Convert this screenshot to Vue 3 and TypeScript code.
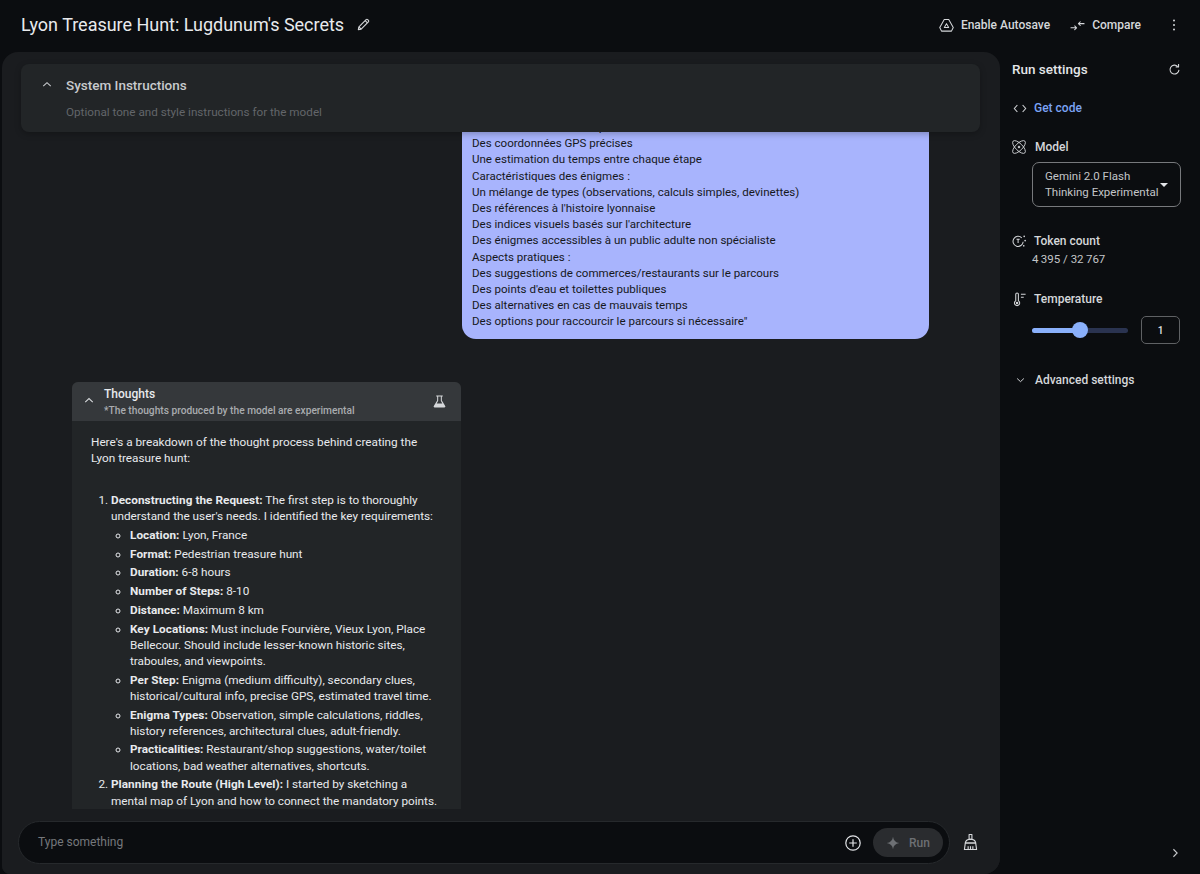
<script setup lang="ts">
const bubbleLines: string[] = [
  'Des informations historiques et culturelles',
  'Des coordonnées GPS précises',
  'Une estimation du temps entre chaque étape',
  'Caractéristiques des énigmes :',
  'Un mélange de types (observations, calculs simples, devinettes)',
  "Des références à l'histoire lyonnaise",
  "Des indices visuels basés sur l'architecture",
  'Des énigmes accessibles à un public adulte non spécialiste',
  'Aspects pratiques :',
  'Des suggestions de commerces/restaurants sur le parcours',
  "Des points d'eau et toilettes publiques",
  'Des alternatives en cas de mauvais temps',
  'Des options pour raccourcir le parcours si nécessaire"',
]
const reqs: { k: string; v: string }[] = [
  { k: 'Location:', v: 'Lyon, France' },
  { k: 'Format:', v: 'Pedestrian treasure hunt' },
  { k: 'Duration:', v: '6-8 hours' },
  { k: 'Number of Steps:', v: '8-10' },
  { k: 'Distance:', v: 'Maximum 8 km' },
  { k: 'Key Locations:', v: 'Must include Fourvière, Vieux Lyon, Place Bellecour. Should include lesser-known historic sites, traboules, and viewpoints.' },
  { k: 'Per Step:', v: 'Enigma (medium difficulty), secondary clues, historical/cultural info, precise GPS, estimated travel time.' },
  { k: 'Enigma Types:', v: 'Observation, simple calculations, riddles, history references, architectural clues, adult-friendly.' },
  { k: 'Practicalities:', v: 'Restaurant/shop suggestions, water/toilet locations, bad weather alternatives, shortcuts.' },
]
</script>

<template>
  <div class="app">
    <header class="topbar">
      <div class="title-wrap">
        <h1 class="title">Lyon Treasure Hunt: Lugdunum's Secrets</h1>
        <svg class="ic-edit" viewBox="0 0 16 16" width="15" height="15" fill="none" stroke="#d5d7da" stroke-width="1.2" stroke-linejoin="round">
          <path d="M2.5 13.5l.6-3L10.8 2.8a1.2 1.2 0 0 1 1.7 0l.7.7a1.2 1.2 0 0 1 0 1.7L5.5 12.9z" />
          <path d="M3.1 10.5l2.4 2.4M9.8 3.8l2.4 2.4" />
        </svg>
      </div>
      <div class="top-actions">
        <button class="top-btn auto">
          <svg viewBox="0 0 16 16" width="15" height="15" fill="none" stroke="#d5d7da" stroke-width="1.1" stroke-linejoin="round">
            <path d="M5.6 1.6h4.800l4.800 8.600-1.900 3.800H2.700L.8 10.200z" />
            <path d="M8 6l2.300 4.200H5.700z" />
          </svg>
          <span>Enable Autosave</span>
        </button>
        <button class="top-btn cmp">
          <svg viewBox="0 0 16 16" width="15" height="15" fill="none" stroke="#d5d7da" stroke-width="1.1" stroke-linecap="round" stroke-linejoin="round">
            <path d="M1 10.500h6M5 8.500l2 2-2 2M15 6H9M11 4L9 6l2 2" />
          </svg>
          <span>Compare</span>
        </button>
        <svg class="kebab" viewBox="0 0 4 14" width="4" height="14" fill="#d5d7da">
          <circle cx="2" cy="2.500" r="1" /><circle cx="2" cy="7" r="1" /><circle cx="2" cy="11.500" r="1" />
        </svg>
      </div>
    </header>

    <div class="body">
      <main class="panel">
        <section class="sys-card">
          <div class="sys-head">
            <svg class="sys-chev" viewBox="0 0 12 8" width="10" height="7" fill="none" stroke="#c9cbce" stroke-width="1.300"><path d="M1.500 6L6 1.800 10.500 6" /></svg>
            <span>System Instructions</span>
          </div>
          <div class="sys-sub">Optional tone and style instructions for the model</div>
        </section>

        <div class="chat">
          <div class="chat-inner">
            <div class="bubble">
              <div v-for="l in bubbleLines" :key="l">{{ l }}</div>
            </div>
            <article class="thoughts">
              <div class="th-head">
                <svg class="th-chev" viewBox="0 0 12 8" width="10" height="7" fill="none" stroke="#d5d7da" stroke-width="1.400"><path d="M1.500 6L6 1.800 10.500 6" /></svg>
                <div class="th-titles">
                  <div class="th-title">Thoughts</div>
                  <div class="th-sub">*The thoughts produced by the model are experimental</div>
                </div>
                <svg class="th-flask" viewBox="0 0 16 16" width="15" height="15" fill="#d5d7da">
                  <path d="M4.500 1.500h7v1.100h-1v4.300l3.600 6c.4.700-.1 1.600-.9 1.600H2.800c-.8 0-1.300-.9-.9-1.600l3.600-6V2.600h-1zM6.600 2.600v4.600L5 10h6L9.400 7.200V2.600z" />
                </svg>
              </div>
              <div class="th-body">
                <p class="intro">Here's a breakdown of the thought process behind creating the Lyon treasure hunt:</p>
                <ol class="steps">
                  <li>
                    <b>Deconstructing the Request:</b> The first step is to thoroughly understand the user's needs. I identified the key requirements:
                    <ul class="reqs">
                      <li v-for="r in reqs" :key="r.k"><b>{{ r.k }}</b> {{ r.v }}</li>
                    </ul>
                  </li>
                  <li>
                    <b>Planning the Route (High Level):</b> I started by sketching a mental map of Lyon and how to connect the mandatory points.
                  </li>
                </ol>
              </div>
            </article>
          </div>
        </div>

        <div class="composer-row">
          <div class="composer">
            <span class="placeholder">Type something</span>
            <svg class="ic-plus" viewBox="0 0 16 16" width="16" height="16" fill="none" stroke="#e3e5e8" stroke-width="1.200">
              <circle cx="8" cy="8" r="7.200" /><path d="M8 4.200v7.600M4.200 8h7.600" />
            </svg>
            <button class="run">
              <svg viewBox="0 0 16 16" width="14" height="14" fill="#6d7074"><path d="M8 .8C8.500 5 11 7.500 15.200 8 11 8.500 8.500 11 8 15.200 7.500 11 5 8.500.8 8 5 7.500 7.500 5 8 .8z" /></svg>
              <span>Run</span>
            </button>
          </div>
          <svg class="ic-brush" viewBox="0 0 16 18" width="15" height="18" fill="none" stroke="#d5d7da" stroke-width="1.200" stroke-linejoin="round">
            <path d="M6.500 1h3v5.200h-3z" />
            <path d="M6.500 6.200h3c2 .2 3.700 1.600 4 3.800H2.500c.3-2.200 2-3.600 4-3.800z" />
            <path d="M2.500 10h11l1 7H1.500zM5.500 13.500V17M8 13.500V17M10.500 13.500V17" />
          </svg>
        </div>
      </main>

      <aside class="side">
        <div class="side-head">
          <span>Run settings</span>
          <svg viewBox="0 0 16 16" width="13" height="13" fill="none" stroke="#d5d7da" stroke-width="1.300">
            <path d="M13.500 8.500A5.500 5.500 0 1 1 12 4.300" /><path d="M13 1.300v3.500H9.500" stroke-linejoin="round" />
          </svg>
        </div>
        <div class="get-code">
          <svg viewBox="0 0 16 12" width="14" height="11" fill="none" stroke="#d5d7da" stroke-width="1.200"><path d="M5 2L1.500 6 5 10M11 2l3.500 4L11 10" /></svg>
          <span>Get code</span>
        </div>
        <div class="sec-label model-l">
          <svg viewBox="0 0 16 16" width="14" height="14" fill="none" stroke="#d5d7da" stroke-width="1">
            <ellipse cx="8" cy="8" rx="9.500" ry="4" transform="rotate(45 8 8)" />
            <ellipse cx="8" cy="8" rx="9.500" ry="4" transform="rotate(-45 8 8)" />
            <circle cx="8" cy="8" r="1" fill="#d5d7da" />
          </svg>
          <span>Model</span>
        </div>
        <div class="model-sel">
          <div class="model-text">Gemini 2.0 Flash<br />Thinking Experimental</div>
          <span class="caret"></span>
        </div>
        <div class="sec-label token-l">
          <svg viewBox="0 0 16 16" width="15" height="15" fill="none" stroke="#d5d7da" stroke-width="1.100">
            <path d="M11.900 8.200a5.400 5.400 0 1 1-1.500-4.100" />
            <path d="M4.800 5.500h3.400M6.500 5.500v4.200" />
            <circle cx="13" cy="2.500" r=".9" fill="#d5d7da" stroke="none" /><circle cx="14" cy="7" r=".9" fill="#d5d7da" stroke="none" /><circle cx="12.500" cy="12.500" r=".9" fill="#d5d7da" stroke="none" />
          </svg>
          <span>Token count</span>
        </div>
        <div class="token-val">4&#8201;395 / 32&#8201;767</div>
        <div class="sec-label temp-l">
          <svg viewBox="0 0 16 16" width="15" height="15" fill="none" stroke="#d5d7da" stroke-width="1.100">
            <path d="M4 2.500a1.400 1.400 0 0 1 2.800 0v6.800a2.800 2.800 0 1 1-2.800 0z" />
            <path d="M9.500 2.500h5M9.500 5.500h3" />
            <circle cx="5.400" cy="11.700" r="1.400" fill="#d5d7da" stroke="none" />
          </svg>
          <span>Temperature</span>
        </div>
        <div class="temp-row">
          <div class="slider">
            <div class="fill" :style="{ width: '50%' }"></div>
            <div class="thumb"></div>
          </div>
          <div class="temp-box">1</div>
        </div>
        <div class="adv">
          <svg viewBox="0 0 12 8" width="9" height="6" fill="none" stroke="#d5d7da" stroke-width="1.300"><path d="M1.500 2L6 6.200 10.500 2" /></svg>
          <span>Advanced settings</span>
        </div>
        <div class="side-foot">
          <svg viewBox="0 0 8 12" width="7" height="10" fill="none" stroke="#c9cbce" stroke-width="1.300"><path d="M1.500 1.500L6 6l-4.500 4.500" /></svg>
        </div>
      </aside>
    </div>
  </div>
</template>

<style>
html, body { margin: 0; background: #0b0d10; }
</style>

<style scoped>
.app {
  width: 1200px; height: 874px; overflow: hidden; display: flex; flex-direction: column;
  background: #0b0d10; color: #e3e5e8; font-family: Roboto, "Liberation Sans", sans-serif; font-size: 13px;
}
button { font: inherit; background: none; border: 0; padding: 0; color: inherit; }
.topbar { height: 52px; flex: none; display: flex; align-items: center; justify-content: space-between; padding: 0 24px 2px 21px; box-sizing: border-box; }
.title-wrap { display: flex; align-items: center; gap: 12px; margin-bottom: 2px; }
.title { margin: 0; font-size: 18px; font-weight: 400; color: #e8eaed; letter-spacing: -0.02px; }
.top-actions { display: flex; align-items: center; }
.top-btn { display: flex; align-items: center; gap: 7px; font-size: 12px; font-weight: 500; color: #d5d7da; }
.auto { margin-right: 20px; }
.cmp { margin-right: 31px; }
.kebab { display: block; }
.body { flex: 1; min-height: 0; display: flex; }
.panel { width: 998px; margin-left: 2px; flex: none; background: #1a1c1f; border-radius: 16px 16px 16px 8px; display: flex; flex-direction: column; position: relative; }
.sys-card { margin: 12px 20px 0 19px; height: 68px; flex: none; background: #222527; border-radius: 8px; box-sizing: border-box; padding: 12px 0 0 21px; box-shadow: 0 2px 6px rgba(0,0,0,.25); position: relative; z-index: 1; }
.sys-head { display: flex; align-items: center; font-size: 13.500px; font-weight: 500; color: #c8cacd; height: 17px; }
.sys-chev { margin-right: 14px; }
.sys-sub { margin: 12px 0 0 24px; font-size: 11.700px; color: #63666a; }
.chat { flex: 1; min-height: 0; overflow: hidden; }
.chat-inner { margin-top: -19px; }
.bubble { margin-left: 460px; width: 467px; height: 226px; box-sizing: border-box; padding: 6px 10px 0 10px; background: #a8b4fd; color: #16181c; border-radius: 0 0 14px 14px; font-size: 11.550px; line-height: 16.200px; }
.thoughts { margin: 43px 0 0 70px; width: 389px; background: #222527; border-radius: 6px 6px 0 0; overflow: hidden; }
.th-head { height: 39px; background: #35383b; display: flex; align-items: flex-start; box-sizing: border-box; padding: 5px 14px 0 12px; }
.th-chev { margin: 10px 10px 0 0; }
.th-titles { flex: 1; }
.th-title { font-size: 12px; font-weight: 500; color: #e8eaed; line-height: 15px; }
.th-sub { font-size: 10.200px; font-weight: 500; color: #a9acaf; line-height: 14px; margin-top: 2px; }
.th-flask { margin-top: 7px; }
.th-body { padding: 13px 18px 0 19px; font-size: 11.750px; line-height: 16.200px; color: #e8eaed; }
.intro { margin: 0 0 18px; padding-right: 8px; }
.steps { margin: 0; padding: 7.600px 0 0 20px; }
.steps b, .reqs b { font-weight: 700; letter-spacing: 0.05px; }
.reqs { margin: 2.600px 0 0; padding: 0 0 0 19px; list-style: circle; }
.reqs li { margin-bottom: 2.500px; }
.composer-row { height: 64px; flex: none; display: flex; align-items: flex-start; background: #1a1c1f; border-radius: 0 0 16px 8px; position: relative; }
.composer { margin: 11px 0 0 16px; width: 932px; height: 43px; box-sizing: border-box; background: #0b0d10; border: 1px solid #26292c; border-radius: 22px; display: flex; align-items: center; padding: 0 6px 0 19px; }
.placeholder { flex: 1; font-size: 12px; color: #75787c; padding-bottom: 2px; }
.ic-plus { margin-right: 12px; }
.run { width: 70px; height: 29px; border-radius: 15px; background: #2a2c2f; display: flex; align-items: center; justify-content: center; gap: 9px; color: #6d7074; font-size: 12px; font-weight: 500; }
.ic-brush { margin: 23px 0 0 13px; }
.side { flex: 1; position: relative; padding: 0 20px 0 12px; box-sizing: border-box; color: #d5d7da; }
.side-head { display: flex; align-items: center; justify-content: space-between; margin-top: 9px; height: 16px; font-size: 13.500px; font-weight: 500; color: #e3e5e8; }
.get-code { display: flex; align-items: center; gap: 7px; margin: 23px 0 0 1px; height: 16px; font-size: 12px; font-weight: 500; color: #7ba3f5; }
.sec-label { display: flex; align-items: center; gap: 9px; font-size: 12px; font-weight: 500; color: #d5d7da; height: 16px; }
.model-l { margin-top: 23px; }
.model-sel { margin: 7px 0 0 20px; width: 149px; height: 45px; box-sizing: border-box; border: 1px solid #77797c; border-radius: 7px; display: flex; align-items: center; padding: 0 0 2px 12px; position: relative; }
.model-text { font-size: 11.500px; line-height: 16px; color: #c3c5c8; white-space: nowrap; }
.caret { position: absolute; right: 12px; top: 20px; width: 0; height: 0; border: 4px solid transparent; border-top: 4px solid #e3e5e8; border-bottom: 0; }
.token-l { margin-top: 26px; gap: 7px; }
.token-val { margin: 2px 0 0 20px; font-size: 11.500px; line-height: 16px; color: #c3c5c8; }
.temp-l { margin-top: 24px; gap: 7px; }
.temp-row { display: flex; align-items: center; margin: 9px 0 0 20px; height: 28px; }
.slider { width: 96px; height: 5px; border-radius: 3px; background: #2a3350; position: relative; }
.fill { height: 5px; background: #8ab0fb; border-radius: 3px; }
.thumb { position: absolute; left: 40px; top: -6px; width: 16px; height: 16px; border-radius: 50%; background: #8ab0fb; }
.temp-box { margin-left: 13px; width: 39px; height: 28px; box-sizing: border-box; border: 1px solid #5f6164; border-radius: 5px; display: flex; align-items: center; justify-content: center; font-size: 10px; font-weight: 500; color: #e3e5e8; }
.adv { display: flex; align-items: center; gap: 10px; margin: 28px 0 0 4px; height: 16px; font-size: 12px; font-weight: 500; color: #d5d7da; }
.side-foot { position: absolute; right: 22px; bottom: 16px; line-height: 0; }
</style>
